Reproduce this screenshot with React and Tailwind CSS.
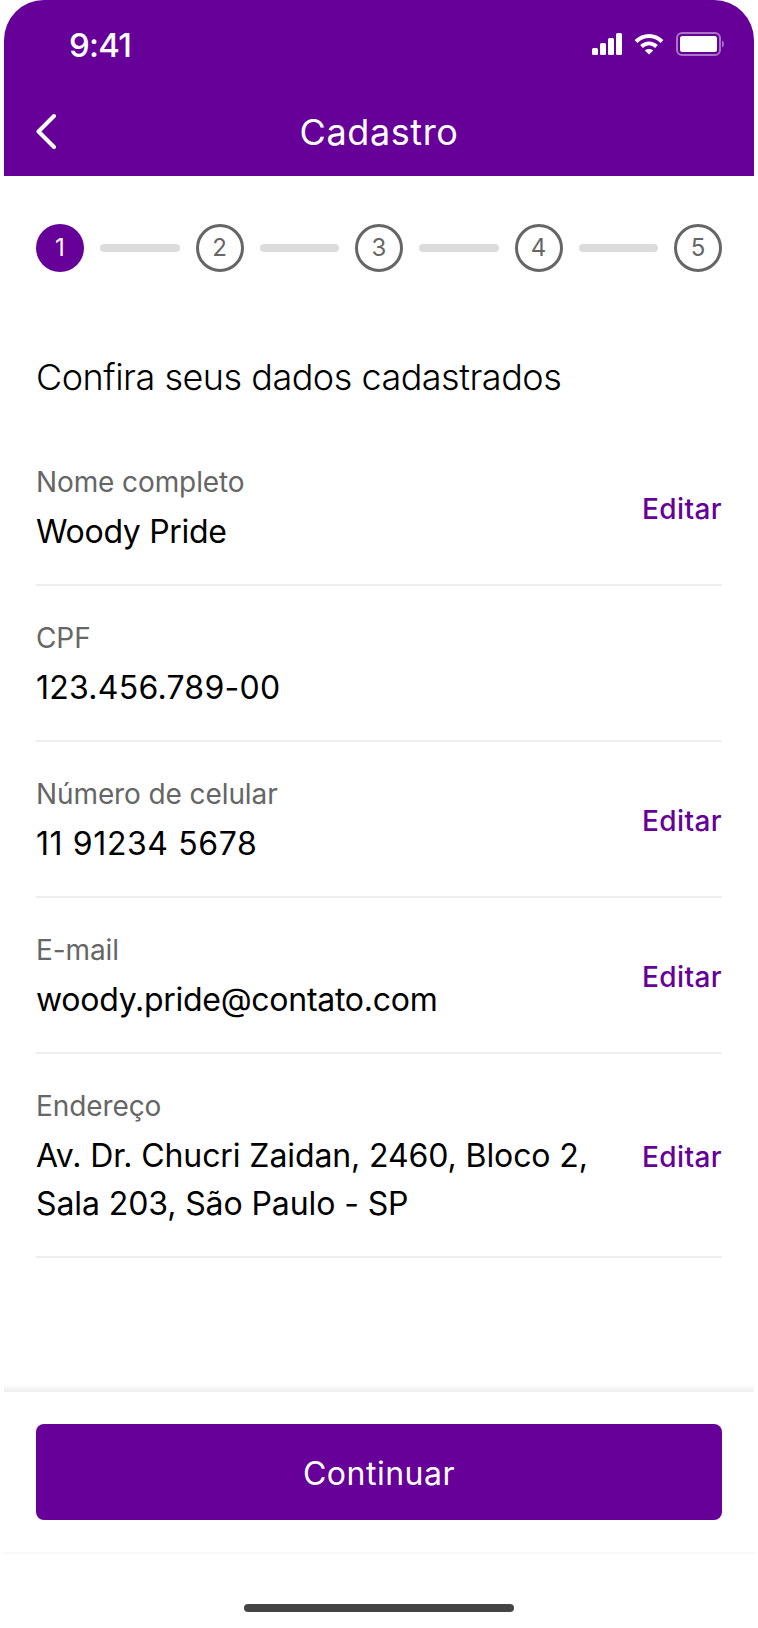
const rows = [
  { label: 'Nome completo', value: 'Woody Pride', edit: true, tracking: 'tracking-[-0.3px]' },
  { label: 'CPF', value: '123.456.789-00', edit: false, tracking: 'tracking-[0.25px]' },
  { label: 'Número de celular', value: '11 91234 5678', edit: true, tracking: 'tracking-[0.6px]' },
  { label: 'E-mail', value: 'woody.pride@contato.com', edit: true, tracking: 'tracking-[-0.27px]' },
  { label: 'Endereço', value: 'Av. Dr. Chucri Zaidan, 2460, Bloco 2, Sala 203, São Paulo - SP', edit: true, tracking: 'tracking-[-0.1px]' },
];

function StatusIcons() {
  return (
    <div className="mb-[2px] flex items-center gap-3">
      <svg width="30" height="22" viewBox="0 0 30 22" fill="white">
        <rect x="0" y="15" width="6" height="7" rx="1.5" />
        <rect x="8" y="10" width="6" height="12" rx="1.5" />
        <rect x="16" y="5" width="6" height="17" rx="1.5" />
        <rect x="24" y="0" width="6" height="22" rx="1.5" />
      </svg>
      <svg width="30" height="22" viewBox="0 0 30 22" fill="none" stroke="white" strokeWidth="4">
        <path d="M2 8.5C9.5 1.2 20.5 1.2 28 8.5" />
        <path d="M7.5 13.5C12 9.5 18 9.5 22.5 13.5" />
        <path d="M15 21.5L10.8 17.6C13 15.6 17 15.6 19.2 17.6Z" fill="white" stroke="none" />
      </svg>
      <svg width="48" height="24" viewBox="0 0 48 24" fill="none">
        <rect x="1" y="1" width="43" height="22" rx="5" stroke="white" strokeOpacity="0.45" strokeWidth="2" />
        <rect x="4" y="4" width="37" height="16" rx="2.5" fill="white" />
        <path d="M46 8.5C47 9 48 10.2 48 12C48 13.8 47 15 46 15.5Z" fill="white" fillOpacity="0.45" />
      </svg>
    </div>
  );
}

function Stepper() {
  return (
    <div className="flex items-center gap-4">
      {[1, 2, 3, 4, 5].map((n) => (
        <div key={n} className="contents">
          <div
            className={
              n === 1
                ? 'flex h-12 w-12 shrink-0 items-center justify-center rounded-full bg-[#660099] text-[24px] text-white'
                : 'flex h-12 w-12 shrink-0 items-center justify-center rounded-full border-[3px] border-[#666666] text-[24px] text-[#666666]'
            }
          >
            {n}
          </div>
          {n < 5 ? <div className="h-2 flex-1 rounded-full bg-[#dcdcdc]" /> : null}
        </div>
      ))}
    </div>
  );
}

function Row({ label, value, edit, tracking }) {
  return (
    <div className="flex items-center justify-between gap-[32px] border-b-2 border-[#eeeeee] pb-[28px] pt-[32px]">
      <div className="min-w-0 flex-1">
        <p className="text-[28px] leading-[40px] tracking-[-0.1px] text-[#666666]">{label}</p>
        <p className={`mt-[6px] text-[32px] leading-[48px] text-black ${tracking}`}>{value}</p>
      </div>
      {edit ? <span className="shrink-0 text-[28px] font-medium leading-[40px] tracking-[0.4px] text-[#660099]">Editar</span> : null}
    </div>
  );
}

export default function App() {
  return (
    <div className="h-[1628px] w-[758px] overflow-hidden bg-white font-['Inter',sans-serif] antialiased">
      <div className="mx-auto flex h-full w-[750px] flex-col">
        <header className="h-[176px] shrink-0 rounded-t-[40px] bg-[#660099] text-white">
          <div className="flex h-[88px] items-center justify-between pl-[65px] pr-[30px] pt-[2px]">
            <span className="text-[33px] font-medium leading-none tracking-[-0.8px]">9:41</span>
            <StatusIcons />
          </div>
          <div className="relative flex h-[88px] items-center justify-center">
            <svg className="absolute left-[32px] top-[24px]" width="24" height="40" viewBox="0 0 24 40" fill="none" stroke="white" strokeWidth="4" strokeLinecap="round" strokeLinejoin="round">
              <path d="M18 4L2.5 19.5L18 35" />
            </svg>
            <h1 className="text-[36px] leading-none tracking-[0.6px]">Cadastro</h1>
          </div>
        </header>

        <main className="flex-1 px-8">
          <div className="pt-12">
            <Stepper />
          </div>
          <h2 className="mt-[83px] text-[36px] font-light leading-[44px] tracking-[-0.5px] text-black">Confira seus dados cadastrados</h2>
          <div className="mt-[31px]">
            {rows.map((row) => (
              <Row key={row.label} {...row} />
            ))}
          </div>
        </main>

        <footer className="shrink-0">
          <div className="h-[8px] bg-gradient-to-b from-white to-[#eeeeee]" />
          <div className="border-b-2 border-[#f8f8f8] px-8 pb-8 pt-8">
            <button type="button" className="flex h-[96px] w-full items-center justify-center rounded-lg bg-[#660099] pt-[3px] text-[32px] tracking-[0.5px] text-white">
              Continuar
            </button>
          </div>
          <div className="flex h-[74px] justify-center pt-[50px]">
            <div className="h-2 w-[270px] rounded-full bg-[#444444]" />
          </div>
        </footer>
      </div>
    </div>
  );
}
